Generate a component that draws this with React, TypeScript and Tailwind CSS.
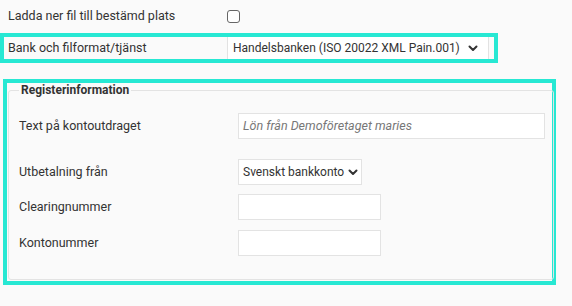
import React from "react";

const Chevron = () => (
  <svg width="10" height="7" viewBox="0 0 10 7" className="shrink-0">
    <path d="M1.5 1.5 L5 5 L8.5 1.5" fill="none" stroke="#333" strokeWidth="2" strokeLinecap="round" strokeLinejoin="round" />
  </svg>
);

export default function App() {
  return (
    <div className="min-h-[306px] w-[572px] bg-[#fafafa] text-[#333] text-[12.5px] leading-none whitespace-nowrap" style={{ fontFamily: "Roboto, 'Liberation Sans', sans-serif" }}>
      {/* Top row */}
      <div className="flex items-center h-[33px] pb-[1px]">
        <div className="w-[227px] pl-[8px]">Ladda ner fil till bestämd plats</div>
        <div className="w-[13px] h-[13px] rounded-[3px] border border-[#666] bg-white" />
      </div>

      {/* Bank row */}
      <div className="w-[498px] h-[30px] border-4 border-[#27e8d3] flex items-stretch">
        <div className="w-[223px] flex items-center pl-[4px] bg-[#fafafa]">Bank och filformat/tjänst</div>
        <div className="w-[262px] flex items-center justify-between bg-white border-l border-r border-[#e2e2e2] pl-[5px] pr-[10px] text-[12px]">
          <span>Handelsbanken (ISO 20022 XML Pain.001)</span>
          <Chevron />
        </div>
      </div>

      {/* Register box */}
      <div className="ml-[3px] mt-[16px] w-[553px] h-[206px] border-4 border-[#27e8d3] pl-[1px] pb-[1px]">
        <fieldset className="h-full border border-[#e3e3e3] rounded-[3px] pl-[10px] pr-[8px] m-0">
          <legend className="ml-0 px-[2px] font-bold text-[12px] leading-[14px]">Registerinformation</legend>
          <div className="flex items-center mt-[16px] h-[26px]">
            <div className="w-[219px]">Text på kontoutdraget</div>
            <div className="w-[307px] h-[26px] bg-white border border-[#e3e3e3] flex items-center pl-[4px] italic text-[#777]">Lön från Demoföretaget maries</div>
          </div>
          <div className="flex items-center mt-[20px] h-[26px]">
            <div className="w-[219px]">Utbetalning från</div>
            <div className="w-[124px] h-[26px] bg-white border border-[#e3e3e3] flex items-center justify-between pl-[4px] pr-[3px] text-[12px]">
              <span>Svenskt bankkonto</span>
              <Chevron />
            </div>
          </div>
          <div className="flex items-center mt-[9px] h-[26px]">
            <div className="w-[219px]">Clearingnummer</div>
            <div className="w-[143px] h-[26px] bg-white border border-[#e3e3e3]" />
          </div>
          <div className="flex items-center mt-[10px] h-[26px]">
            <div className="w-[219px]">Kontonummer</div>
            <div className="w-[143px] h-[26px] bg-white border border-[#e3e3e3]" />
          </div>
        </fieldset>
      </div>
    </div>
  );
}
